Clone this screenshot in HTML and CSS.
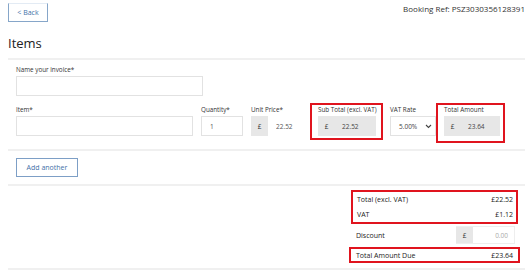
FILE: index.html
```html
<!DOCTYPE html>
<html>
<head>
    <title>Invoice items</title>
    <link rel="stylesheet" href="styles.css">
</head>
<body>
    <div class="topbar">
        <button class="back">&lt; Back</button>
        <span class="ref">Booking Ref: PSZ3030356128391</span>
    </div>

    <h1 class="title">Items</h1>

    <div class="section">
        <div class="field">
            <label>Name your invoice*</label>
            <input type="text" class="inp name-inp">
        </div>

        <div class="item-row">
            <div class="field plain">
                <label>Item*</label>
                <input type="text" class="inp item-inp">
            </div>
            <div class="field plain">
                <label>Quantity*</label>
                <input type="text" class="inp qty-inp" value="1">
            </div>
            <div class="field plain">
                <label>Unit Price*</label>
                <div class="group">
                    <span class="addon">£</span>
                    <input type="text" class="inp price-inp" value="22.52">
                </div>
            </div>
            <div class="field marked sub-mark">
                <label>Sub Total (excl. VAT)</label>
                <div class="group readonly sub-group">
                    <span class="addon">£</span>
                    <span class="val">22.52</span>
                </div>
            </div>
            <div class="field plain vat-field">
                <label>VAT Rate</label>
                <div class="select">
                    <span>5.00%</span>
                    <svg width="7" height="5" viewBox="0 0 7 5"><path d="M1 1l2.5 2.5L6 1" fill="none" stroke="#444" stroke-width="1.1"/></svg>
                </div>
            </div>
            <div class="field marked total-mark">
                <label>Total Amount</label>
                <div class="group readonly total-group">
                    <span class="addon">£</span>
                    <span class="val">23.64</span>
                </div>
            </div>
        </div>
    </div>

    <div class="section add-section">
        <button class="add">Add another</button>
    </div>

    <div class="summary">
        <div class="sum-box marked">
            <div class="sum-row"><span>Total (excl. VAT)</span><span>£22.52</span></div>
            <div class="sum-row"><span>VAT</span><span>£1.12</span></div>
        </div>
        <div class="sum-row discount">
            <span>Discount</span>
            <div class="group">
                <span class="addon">£</span>
                <span class="disc-val">0.00</span>
            </div>
        </div>
        <div class="sum-row due marked"><span>Total Amount Due</span><span>£23.64</span></div>
    </div>
</body>
</html>
```

FILE: styles.css
```css
body {
    margin: 0;
    padding: 0 4px 0 8px;
    font-family: "Open Sans", "Noto Sans", sans-serif;
    color: #333;
    background: #fff;
}

.topbar {
    display: flex;
    justify-content: space-between;
    align-items: flex-start;
    height: 22px;
}
.back {
    margin-top: 3px;
    width: 40px;
    height: 19px;
    padding: 0;
    background: #fff;
    border: 1px solid #86a6c9;
    border-top-color: #e3ebf4;
    color: #3f70a8;
    font: 7px "Open Sans", sans-serif;
}
.ref {
    margin-top: 3px;
    font-size: 8px;
    color: #333;
}

.title {
    margin: 13px 0 0;
    font-size: 13px;
    font-weight: 400;
    line-height: 17px;
    color: #222;
}

.section {
    margin-top: 6px;
    border-top: 2px solid #f0f0f0;
    padding: 6px 0 6px 8px;
}
.field {
    display: flex;
    flex-direction: column;
}
.field label {
    font-size: 6.3px;
    line-height: 8px;
    color: #333;
    margin-bottom: 2px;
    white-space: nowrap;
}
.inp {
    box-sizing: border-box;
    height: 20px;
    border: 1px solid #e2e2e2;
    padding: 0 8px;
    font: 6.5px "Open Sans", sans-serif;
    color: #555;
    outline: none;
}
.name-inp { width: 187px; }
.item-inp { width: 177px; }
.qty-inp { width: 42px; }
.price-inp { width: 34px; border: none; }

.item-row {
    display: flex;
    align-items: flex-start;
    gap: 8px;
    margin-top: 7px;
}
.plain { margin-top: 3px; }

.group {
    display: flex;
    height: 20px;
    align-items: stretch;
    font-size: 6.5px;
}
.addon {
    width: 17px;
    display: flex;
    align-items: center;
    justify-content: center;
    background: #e7e7e7;
    color: #333;
    font-size: 6.5px;
}
.readonly {
    background: #e7e7e7;
}
.val {
    display: flex;
    align-items: center;
    padding-left: 7px;
    color: #444;
}
.sub-group { width: 58px; }
.total-group { width: 56px; }

.marked {
    border: 2px solid #e0141e;
}
.sub-mark {
    box-sizing: border-box;
    width: 73px;
    padding: 1px 5px 2px 6px;
    margin-right: -1px;
}
.total-mark {
    box-sizing: border-box;
    width: 69px;
    padding: 1px 3px 5px 6px;
}
.vat-field { margin-right: -8px; }

.select {
    box-sizing: border-box;
    width: 46px;
    height: 20px;
    border: 1px solid #e2e2e2;
    display: flex;
    align-items: center;
    justify-content: space-between;
    padding: 0 3px 0 8px;
    font-size: 6.5px;
    color: #444;
}

.add-section {
    margin-top: 0;
    padding: 7px 0 7px 8px;
}
.add {
    box-sizing: border-box;
    display: block;
    width: 62px;
    height: 19px;
    padding: 0;
    background: #fff;
    border: 1px solid #7d9fc6;
    color: #3f70a8;
    font: 7px "Open Sans", sans-serif;
}

.summary {
    border-top: 2px solid #f0f0f0;
    border-bottom: 2px solid #f0f0f0;
    padding: 4px 7px 5px 343px;
    display: flex;
    flex-direction: column;
}
.sum-row {
    display: flex;
    justify-content: space-between;
    align-items: center;
    height: 15px;
    padding: 0 3px 0 4px;
    font-size: 7px;
    color: #222;
}
.discount {
    height: 18px;
    margin-top: 2px;
    padding: 0 3px 0 5px;
}
.discount .group {
    height: 18px;
    border: 1px solid #eee;
    border-left: none;
    box-sizing: border-box;
}
.disc-val {
    width: 41px;
    display: flex;
    align-items: center;
    justify-content: flex-end;
    padding-right: 6px;
    box-sizing: border-box;
    color: #aaa;
}
.due {
    height: 12px;
    margin: 3px -2px 0;
    padding: 0 5px;
}
```
